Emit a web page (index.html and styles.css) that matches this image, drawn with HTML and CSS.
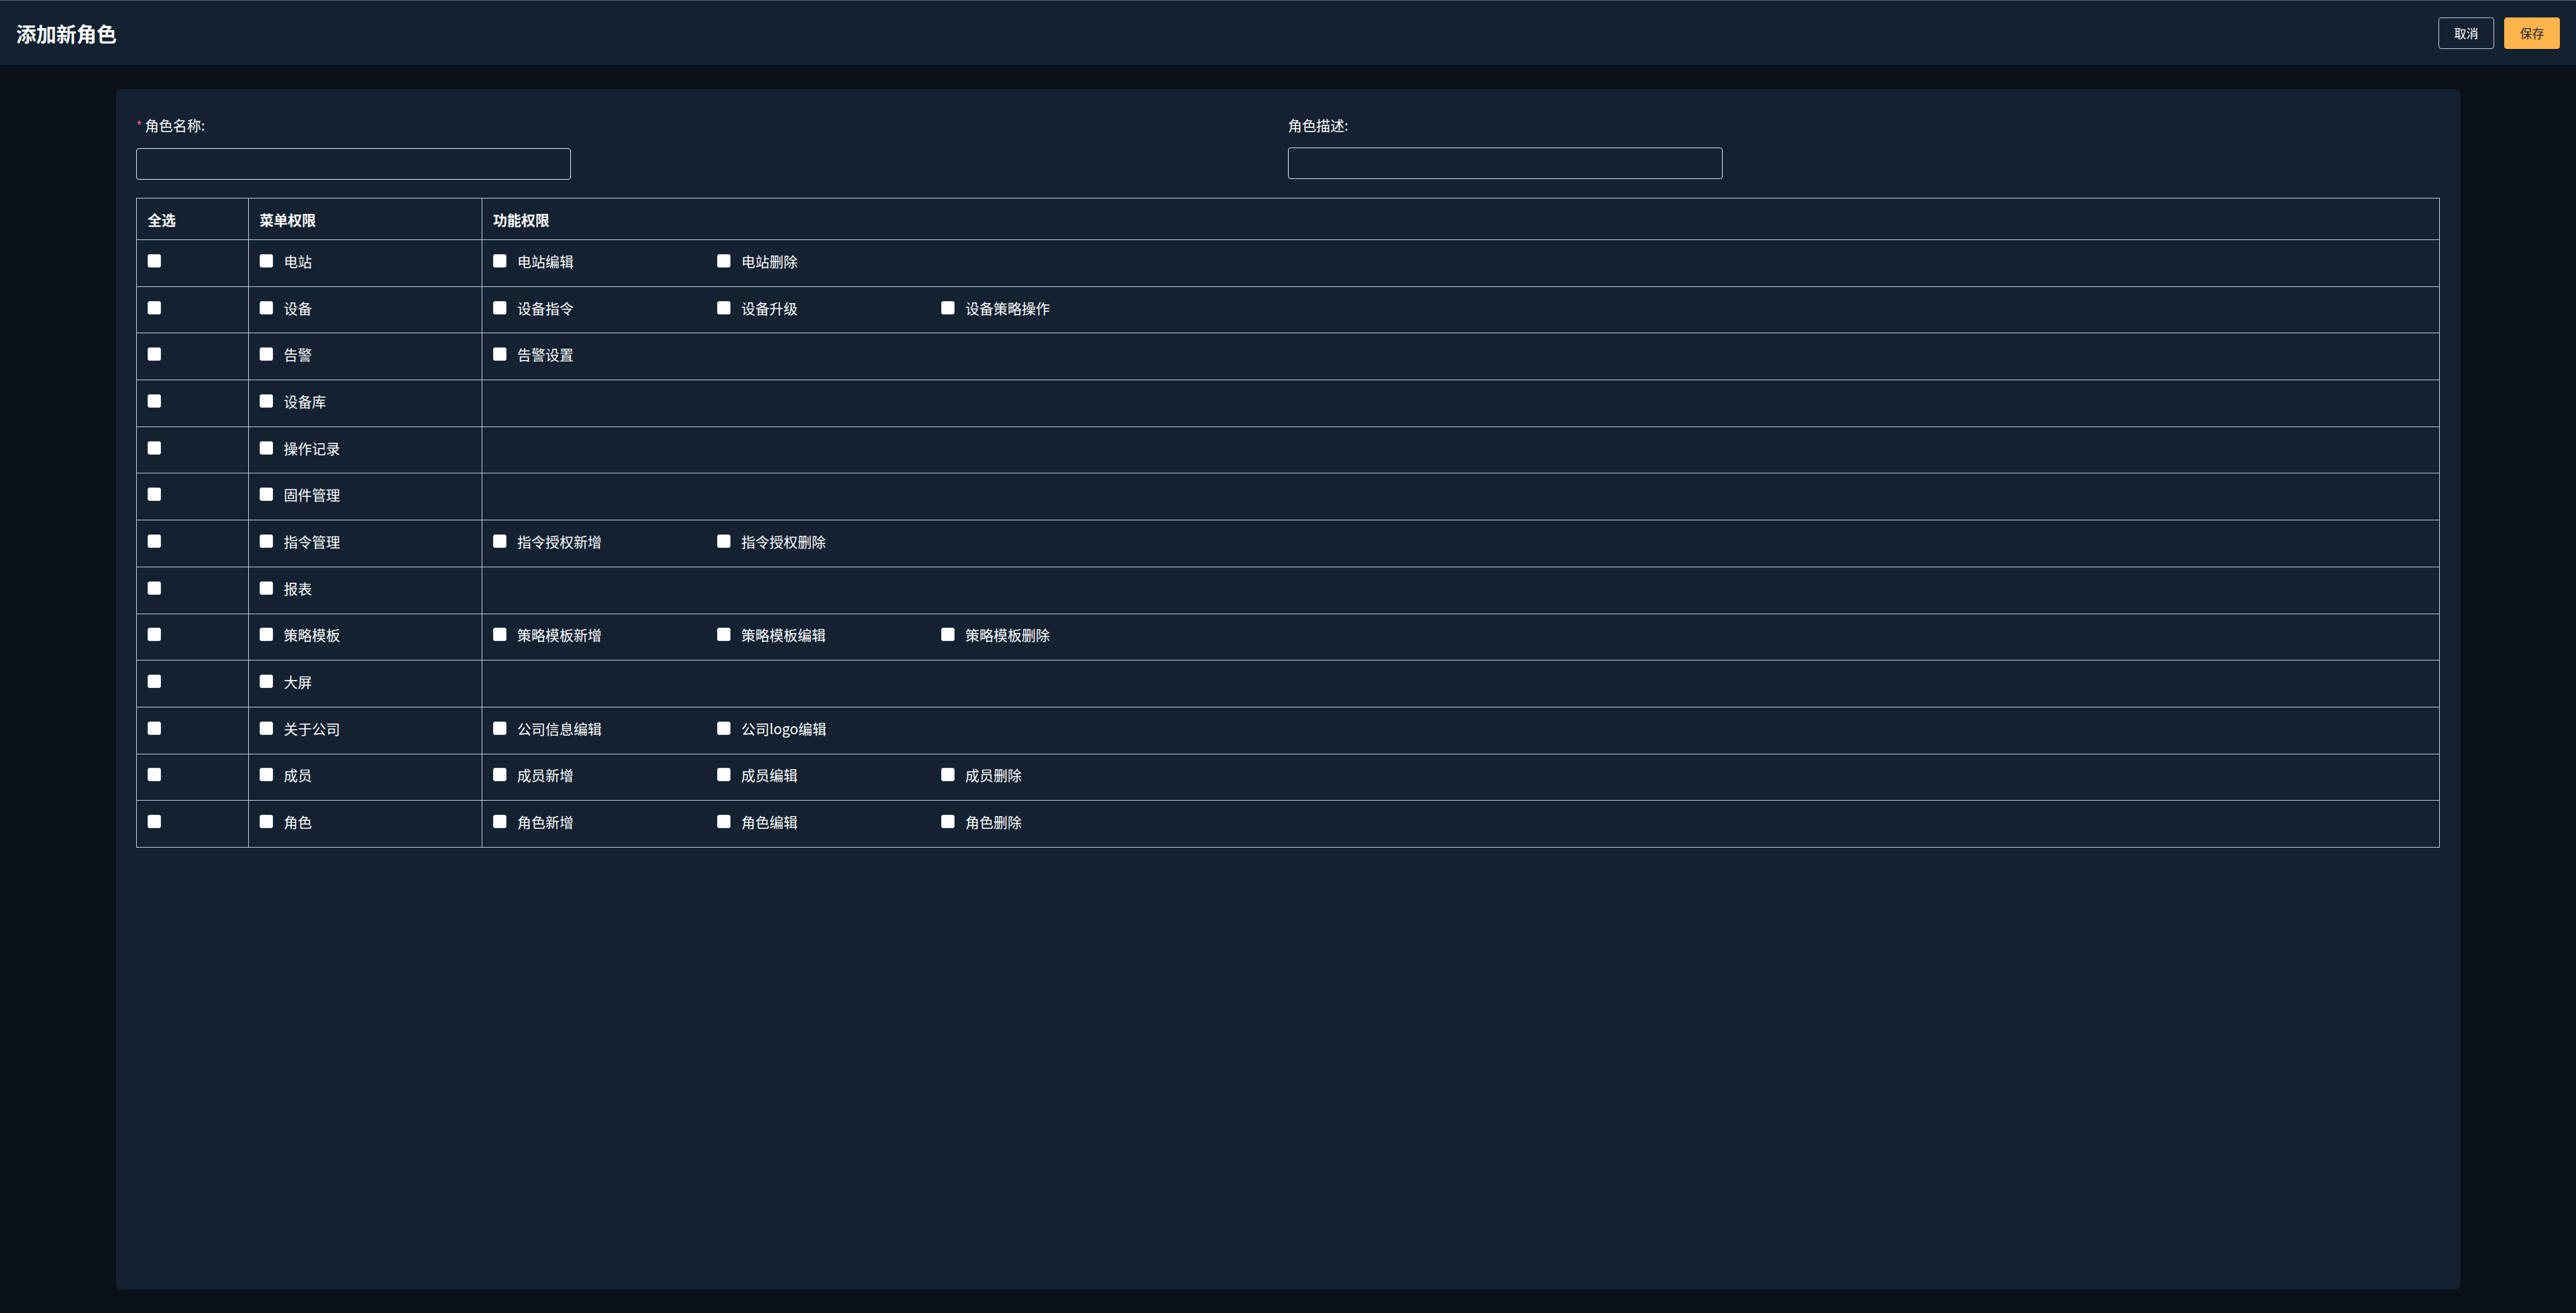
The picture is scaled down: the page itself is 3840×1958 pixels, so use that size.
FILE: index.html
```html
<!DOCTYPE html>
<html lang="zh-CN">
<head>
<meta charset="utf-8">
<title>添加新角色</title>
<link rel="stylesheet" href="styles.css">
</head>
<body>
<header class="topbar">
  <h1 class="title">添加新角色</h1>
  <div class="actions">
    <button class="btn btn-cancel">取消</button>
    <button class="btn btn-save">保存</button>
  </div>
</header>
<main class="main">
  <section class="card">
    <div class="form-grid">
      <div class="field">
        <label class="field-label"><span class="req">*</span>角色名称:</label>
        <input class="field-input" type="text">
      </div>
      <div class="field">
        <label class="field-label">角色描述:</label>
        <input class="field-input" type="text">
      </div>
    </div>
    <table class="perm-table">
      <colgroup>
        <col class="col-all">
        <col class="col-menu">
        <col>
      </colgroup>
      <thead>
        <tr><th>全选</th><th>菜单权限</th><th>功能权限</th></tr>
      </thead>
      <tbody>
        <tr><td><input class="cb" type="checkbox"></td><td><label class="opt"><input class="cb" type="checkbox">电站</label></td><td><div class="opts"><label class="opt"><input class="cb" type="checkbox">电站编辑</label><label class="opt"><input class="cb" type="checkbox">电站删除</label></div></td></tr>
        <tr><td><input class="cb" type="checkbox"></td><td><label class="opt"><input class="cb" type="checkbox">设备</label></td><td><div class="opts"><label class="opt"><input class="cb" type="checkbox">设备指令</label><label class="opt"><input class="cb" type="checkbox">设备升级</label><label class="opt"><input class="cb" type="checkbox">设备策略操作</label></div></td></tr>
        <tr><td><input class="cb" type="checkbox"></td><td><label class="opt"><input class="cb" type="checkbox">告警</label></td><td><div class="opts"><label class="opt"><input class="cb" type="checkbox">告警设置</label></div></td></tr>
        <tr><td><input class="cb" type="checkbox"></td><td><label class="opt"><input class="cb" type="checkbox">设备库</label></td><td></td></tr>
        <tr><td><input class="cb" type="checkbox"></td><td><label class="opt"><input class="cb" type="checkbox">操作记录</label></td><td></td></tr>
        <tr><td><input class="cb" type="checkbox"></td><td><label class="opt"><input class="cb" type="checkbox">固件管理</label></td><td></td></tr>
        <tr><td><input class="cb" type="checkbox"></td><td><label class="opt"><input class="cb" type="checkbox">指令管理</label></td><td><div class="opts"><label class="opt"><input class="cb" type="checkbox">指令授权新增</label><label class="opt"><input class="cb" type="checkbox">指令授权删除</label></div></td></tr>
        <tr><td><input class="cb" type="checkbox"></td><td><label class="opt"><input class="cb" type="checkbox">报表</label></td><td></td></tr>
        <tr><td><input class="cb" type="checkbox"></td><td><label class="opt"><input class="cb" type="checkbox">策略模板</label></td><td><div class="opts"><label class="opt"><input class="cb" type="checkbox">策略模板新增</label><label class="opt"><input class="cb" type="checkbox">策略模板编辑</label><label class="opt"><input class="cb" type="checkbox">策略模板删除</label></div></td></tr>
        <tr><td><input class="cb" type="checkbox"></td><td><label class="opt"><input class="cb" type="checkbox">大屏</label></td><td></td></tr>
        <tr><td><input class="cb" type="checkbox"></td><td><label class="opt"><input class="cb" type="checkbox">关于公司</label></td><td><div class="opts"><label class="opt"><input class="cb" type="checkbox">公司信息编辑</label><label class="opt"><input class="cb" type="checkbox">公司logo编辑</label></div></td></tr>
        <tr><td><input class="cb" type="checkbox"></td><td><label class="opt"><input class="cb" type="checkbox">成员</label></td><td><div class="opts"><label class="opt"><input class="cb" type="checkbox">成员新增</label><label class="opt"><input class="cb" type="checkbox">成员编辑</label><label class="opt"><input class="cb" type="checkbox">成员删除</label></div></td></tr>
        <tr><td><input class="cb" type="checkbox"></td><td><label class="opt"><input class="cb" type="checkbox">角色</label></td><td><div class="opts"><label class="opt"><input class="cb" type="checkbox">角色新增</label><label class="opt"><input class="cb" type="checkbox">角色编辑</label><label class="opt"><input class="cb" type="checkbox">角色删除</label></div></td></tr>
      </tbody>
    </table>
  </section>
</main>
</body>
</html>
```
FILE: styles.css
```css
* { box-sizing: border-box; }
html, body {
  margin: 0;
  padding: 0;
  background: #0a1019;
  color: #ffffff;
  font-family: "Noto Sans CJK SC", "Noto Sans", sans-serif;
}
.topbar {
  height: 97px;
  border-top: 1px solid #5b6770;
  background: #132131;
  display: flex;
  align-items: center;
  justify-content: space-between;
  padding: 0 24px;
}
.title {
  margin: 0;
  font-size: 30px;
  font-weight: 700;
  color: #ffffff;
}
.actions {
  display: flex;
  gap: 15px;
}
.btn {
  width: 83px;
  height: 47px;
  border-radius: 4px;
  font-family: inherit;
  font-size: 18px;
  padding: 0;
  cursor: pointer;
}
.btn-cancel {
  background: transparent;
  border: 1px solid #c9cdd2;
  color: #ffffff;
}
.btn-save {
  background: #fdb44b;
  border: 1px solid #fdb44b;
  color: #1d2733;
}
.main {
  padding: 36px 172px 35px 173px;
}
.card {
  height: 1790px;
  background: #132131;
  border-radius: 8px;
  padding: 38px 31px 0 30px;
}
.form-grid {
  display: grid;
  grid-template-columns: 1fr 1fr;
}
.field {
  display: flex;
  flex-direction: column;
  align-items: flex-start;
}
.field-label {
  font-size: 21px;
  line-height: 30px;
  color: #ffffff;
}
.req {
  color: #f56c6c;
  font-size: 19px;
  margin-right: 4px;
}
.field-input {
  margin-top: 19px;
  width: 648px;
  height: 47px;
  background: #132131;
  border: 1px solid #e6e8eb;
  border-radius: 4px;
  color: #fff;
  font-size: 20px;
  padding: 0 12px;
}
.perm-table {
  margin-top: 27px;
  width: 100%;
  border-collapse: collapse;
  table-layout: fixed;
  font-size: 21px;
}
.col-all { width: 167px; }
.col-menu { width: 348px; }
.perm-table th,
.perm-table td {
  border: 1px solid #c8cdd3;
  padding: 0 16px;
  text-align: left;
  vertical-align: middle;
  color: #ffffff;
}
.perm-table th {
  height: 62px;
  font-weight: 700;
}
.perm-table td {
  height: 69.7px;
  padding-bottom: 7px;
}
.cb {
  -webkit-appearance: none;
  appearance: none;
  width: 20px;
  height: 20px;
  margin: 0;
  background: #ffffff;
  border: 1px solid #d7dbe0;
  border-radius: 3px;
  display: block;
  flex: none;
}
.opts {
  display: flex;
}
.opt {
  display: flex;
  align-items: center;
  gap: 16px;
  width: 334px;
  flex: none;
  white-space: nowrap;
}
```
